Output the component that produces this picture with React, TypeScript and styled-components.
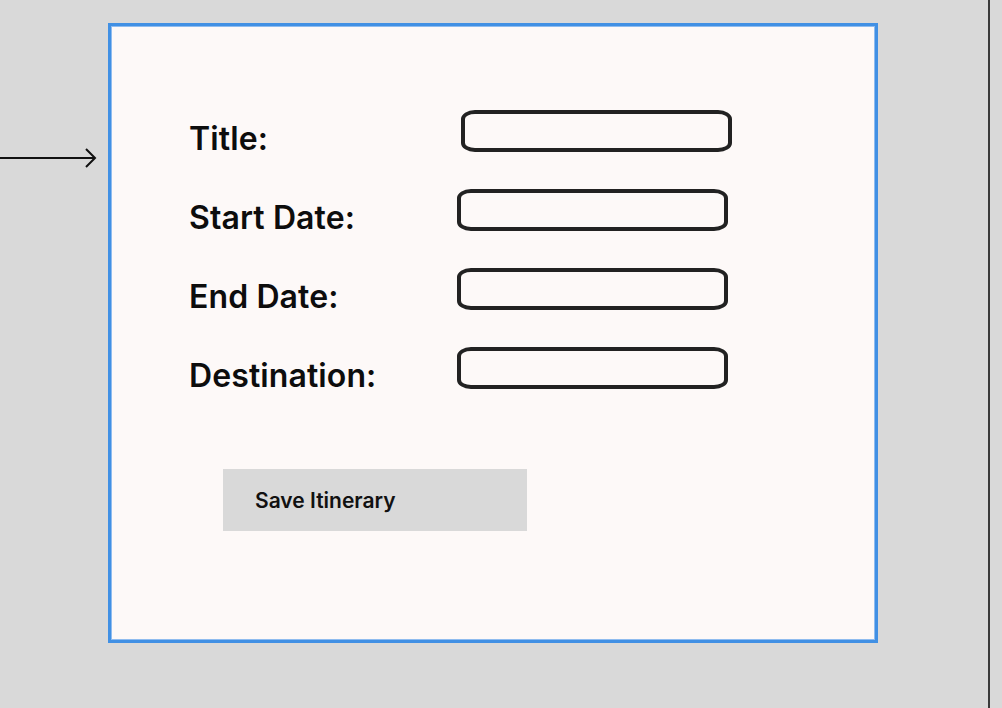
import styled, { createGlobalStyle } from "styled-components";

const GlobalStyle = createGlobalStyle`
    html, body {
        margin: 0;
        padding: 0;
        background-color: #d9d9d9;
        font-family: Inter, "Noto Sans", sans-serif;
    }
`;

const Page = styled.div`
    display: flex;
    height: 100vh;
    overflow: hidden;
`;

const Gutter = styled.div`
    width: 108px;
    flex-shrink: 0;
    padding-top: 147px;
    box-sizing: border-box;
`;

const Frame = styled.div`
    margin-top: 23px;
    width: 770px;
    height: 620px;
    box-sizing: border-box;
    border: 3px solid #4190e4;
    box-shadow: inset 0 0 0 1px #8fbcef;
    background-color: #fdf9f8;
    padding: 84px 0 0 78px;
    flex-shrink: 0;
`;

const Form = styled.div`
    display: grid;
    grid-template-columns: 268px 275px;
    align-items: start;
    row-gap: 32px;
`;

const Label = styled.div`
    font-size: 32px;
    font-weight: 600;
    line-height: 36px;
    margin-top: 11px;
    color: #0d0d0d;
    letter-spacing: 0.1px;
`;

const Field = styled.div<{ shift?: number }>`
    width: 271px;
    height: 42px;
    box-sizing: border-box;
    border: 4px solid #222;
    border-radius: 14px / 9px;
    margin-left: ${(props) => props.shift || 0}px;
`;

const SaveButton = styled.div`
    margin: 75px 0 0 34px;
    width: 304px;
    height: 62px;
    background-color: #d9d9d9;
    display: flex;
    align-items: center;
    padding-left: 32px;
    box-sizing: border-box;
    font-size: 21px;
    font-weight: 600;
    color: #111;
`;

const Divider = styled.div`
    width: 2px;
    margin-left: auto;
    margin-right: 12px;
    background-color: #3a3a3a;
`;

const fields = [
    { label: "Title:", shift: 4 },
    { label: "Start Date:", shift: 0 },
    { label: "End Date:", shift: 0 },
    { label: "Destination:", shift: 0 }
];

function App() {
    return (
        <>
            <GlobalStyle />
            <Page>
                <Gutter>
                    <svg width="100" height="24" viewBox="0 0 100 24">
                        <line x1="0" y1="11" x2="95" y2="11" stroke="#111" strokeWidth="2" />
                        <polyline points="86,2 95,11 86,20" fill="none" stroke="#111" strokeWidth="2" />
                    </svg>
                </Gutter>
                <Frame>
                    <Form>
                        {fields.map((f) => [
                            <Label key={f.label}>{f.label}</Label>,
                            <Field key={f.label + "-field"} shift={f.shift} />
                        ])}
                    </Form>
                    <SaveButton>Save Itinerary</SaveButton>
                </Frame>
                <Divider />
            </Page>
        </>
    );
}

export default App;
